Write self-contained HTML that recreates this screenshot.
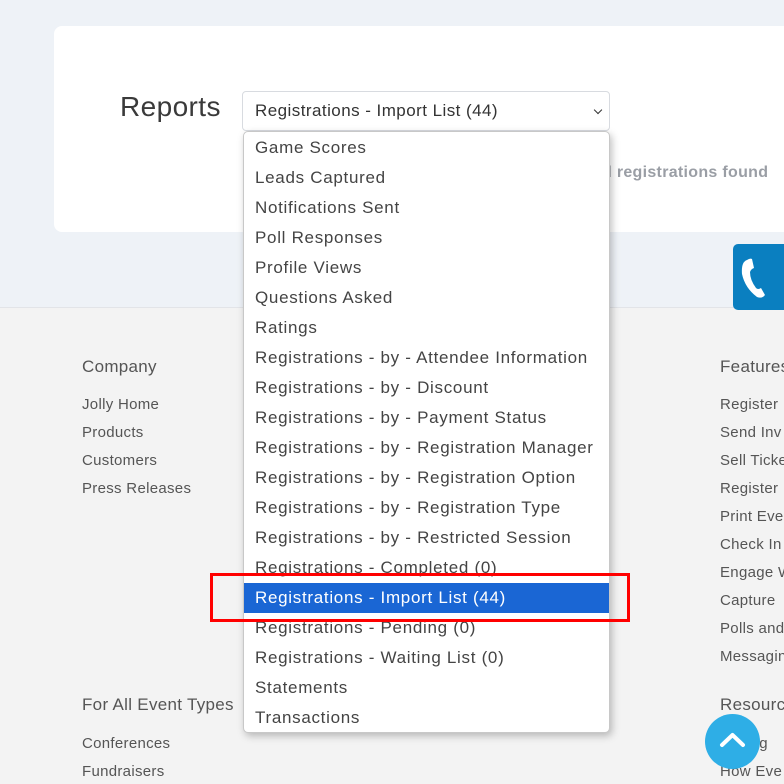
<!DOCTYPE html>
<html><head><style>
*{margin:0;padding:0;box-sizing:border-box}
body{width:784px;height:784px;overflow:hidden;position:relative;font-family:"Liberation Sans",sans-serif;background:#f3f3f3}
.top{position:absolute;left:0;top:0;width:784px;height:308px;background:#eef2f7;border-bottom:1px solid #e2e4e8}
.card{position:absolute;left:54px;top:26px;width:740px;height:206px;background:#fff;border-radius:8px}
.h{position:absolute;left:120px;top:91px;font-size:28px;color:#3a3a3a;letter-spacing:0.4px}
.sel{position:absolute;left:242px;top:91px;width:368px;height:40px;border:1px solid #d8dbe0;border-radius:4px;background:#fff;font-size:17px;color:#333;padding:9px 12px;letter-spacing:0.45px}
.sel:after{content:"";position:absolute;right:8px;top:15px;width:5px;height:5px;border-right:1.6px solid #333;border-bottom:1.6px solid #333;transform:rotate(45deg)}
.found{position:absolute;left:602px;top:164px;font-size:16px;color:#9a9ea5;font-weight:bold;letter-spacing:0.3px}
.phone{position:absolute;left:733px;top:244px;width:60px;height:66px;background:#0a7fc0;border-radius:5px}
.list{position:absolute;left:243px;top:131px;width:367px;height:602px;background:#fff;border:1px solid #c8c8c8;border-radius:5px;box-shadow:2px 3px 8px rgba(0,0,0,.25);padding-top:1px}
.list div{height:30px;line-height:30px;padding-left:11px;font-size:17px;color:#444;letter-spacing:0.7px;white-space:nowrap}
.list .act{background:#1a66d4;color:#fff}
.red{position:absolute;left:210px;top:573px;width:420px;height:49px;border:3px solid #f00}
.f{position:absolute;color:#555;white-space:nowrap;letter-spacing:0.3px}
.fh{font-size:17px}.fl{font-size:15px}
.up{position:absolute;left:705px;top:714px;width:55px;height:55px;border-radius:50%;background:#2eaee6}
</style></head><body>
<div class="top"></div>
<div class="card"></div>
<div class="h">Reports</div>
<div class="sel">Registrations - Import List (44)</div>
<div class="found">d registrations found</div>
<div class="phone"><svg width="40" height="50" viewBox="0 0 40 50" style="position:absolute;left:4px;top:8px"><path d="M10 8 Q4 10 5 22 Q8 36 20 45 Q25 47 28 43 L24 36 Q21 38 19 36 Q13 28 13 20 Q14 17 17 16 L15 7 Q13 6 10 8Z" fill="#fff"/></svg></div>
<div class="f fh" style="left:82px;top:357px">Company</div>
<div class="f fl" style="left:82px;top:396px">Jolly Home</div>
<div class="f fl" style="left:82px;top:424px">Products</div>
<div class="f fl" style="left:82px;top:452px">Customers</div>
<div class="f fl" style="left:82px;top:480px">Press Releases</div>
<div class="f fh" style="left:82px;top:695px">For All Event Types</div>
<div class="f fl" style="left:82px;top:735px">Conferences</div>
<div class="f fl" style="left:82px;top:763px">Fundraisers</div>
<div class="f fh" style="left:720px;top:357px">Features</div>
<div class="f fl" style="left:720px;top:396px">Register</div>
<div class="f fl" style="left:720px;top:424px">Send Inv</div>
<div class="f fl" style="left:720px;top:452px">Sell Ticke</div>
<div class="f fl" style="left:720px;top:480px">Register</div>
<div class="f fl" style="left:720px;top:508px">Print Eve</div>
<div class="f fl" style="left:720px;top:536px">Check In</div>
<div class="f fl" style="left:720px;top:564px">Engage W</div>
<div class="f fl" style="left:720px;top:592px">Capture</div>
<div class="f fl" style="left:720px;top:620px">Polls and</div>
<div class="f fl" style="left:720px;top:648px">Messagin</div>
<div class="f fh" style="left:720px;top:695px">Resources</div>
<div class="f fl" style="left:720px;top:735px">Pricing</div>
<div class="f fl" style="left:720px;top:763px">How Eve</div>
<div class="list">
<div>Game Scores</div><div>Leads Captured</div><div>Notifications Sent</div><div>Poll Responses</div><div>Profile Views</div><div>Questions Asked</div><div>Ratings</div><div>Registrations - by - Attendee Information</div><div>Registrations - by - Discount</div><div>Registrations - by - Payment Status</div><div>Registrations - by - Registration Manager</div><div>Registrations - by - Registration Option</div><div>Registrations - by - Registration Type</div><div>Registrations - by - Restricted Session</div><div>Registrations - Completed (0)</div><div class="act">Registrations - Import List (44)</div><div>Registrations - Pending (0)</div><div>Registrations - Waiting List (0)</div><div>Statements</div><div>Transactions</div>
</div>
<div class="red"></div>
<div class="up"><svg width="55" height="55" viewBox="0 0 55 55"><path d="M17 31 L27.5 21 L38 31" fill="none" stroke="#fff" stroke-width="4" stroke-linecap="round" stroke-linejoin="round"/></svg></div>
</body></html>
